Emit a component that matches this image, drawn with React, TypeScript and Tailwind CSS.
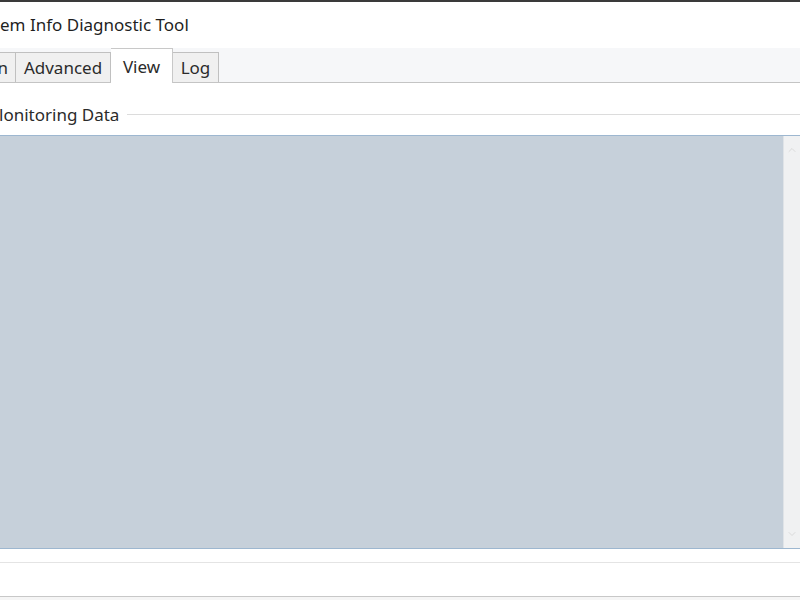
import { ChevronUp, ChevronDown } from "lucide-react";

const font = { fontFamily: '"Noto Sans", "Open Sans", sans-serif' };

export default function App() {
  return (
    <div className="w-[800px] h-[600px] overflow-hidden bg-white flex flex-col text-[#1f1f1f]" style={font}>
      <div className="h-[2px] bg-[#3a3a3a] shrink-0" />

      {/* title bar */}
      <div className="h-[46px] shrink-0 flex items-center pl-0 text-[17px] leading-none">
        <span className="-mt-[2px]">em Info Diagnostic Tool</span>
      </div>

      {/* tab strip */}
      <div className="h-[35px] shrink-0 flex items-end bg-[#f6f7f9] border-b border-[#c4c4c4] relative">
        <div className="h-[30px] w-[16px] border border-b-0 border-l-0 border-[#c0c0c0] bg-[#f0f0f0] flex items-center justify-end pr-[7px] text-[17px] text-[#2b2b2b]">
          n
        </div>
        <div className="h-[30px] w-[95px] border border-b-0 border-l-0 border-[#c0c0c0] bg-[#f0f0f0] flex items-center justify-center text-[17px] text-[#2b2b2b]">
          Advanced
        </div>
        <div className="h-[35px] w-[62px] -mb-px border border-b-0 border-l-0 border-[#c8c8c8] bg-white flex items-start pt-[5px] justify-center text-[17px] text-[#2b2b2b] z-10">
          View
        </div>
        <div className="h-[30px] w-[46px] border border-b-0 border-l-0 border-[#c0c0c0] bg-[#f0f0f0] flex items-center justify-center text-[17px] text-[#2b2b2b]">
          Log
        </div>
      </div>

      {/* group box header */}
      <div className="h-[52px] shrink-0 flex items-end pb-[8px]">
        <div className="flex items-center w-full">
          <span className="text-[17px] text-[#2b2b2b] -ml-[1px]">lonitoring Data</span>
          <div className="flex-1 h-px bg-[#dcdcdc] ml-[8px]" />
        </div>
      </div>

      {/* data area */}
      <div className="h-[414px] shrink-0 flex border-t border-b border-[#9db7d0] bg-[#c6d0da]">
        <div className="flex-1" />
        <div className="w-[17px] bg-[#f0f1f2] border-l border-[#dfe3e7] flex flex-col items-center justify-between py-[8px]">
          <ChevronUp className="w-[12px] h-[12px] text-[#d2d2d2]" strokeWidth={1.5} />
          <ChevronDown className="w-[12px] h-[12px] text-[#d2d2d2]" strokeWidth={1.5} />
        </div>
      </div>

      <div className="h-[14px] shrink-0 border-b border-[#e4e4e4]" />
      <div className="h-[34px] shrink-0 border-b border-[#c8c8c8]" />
      <div className="flex-1 bg-[#f5f5f5]" />
    </div>
  );
}
